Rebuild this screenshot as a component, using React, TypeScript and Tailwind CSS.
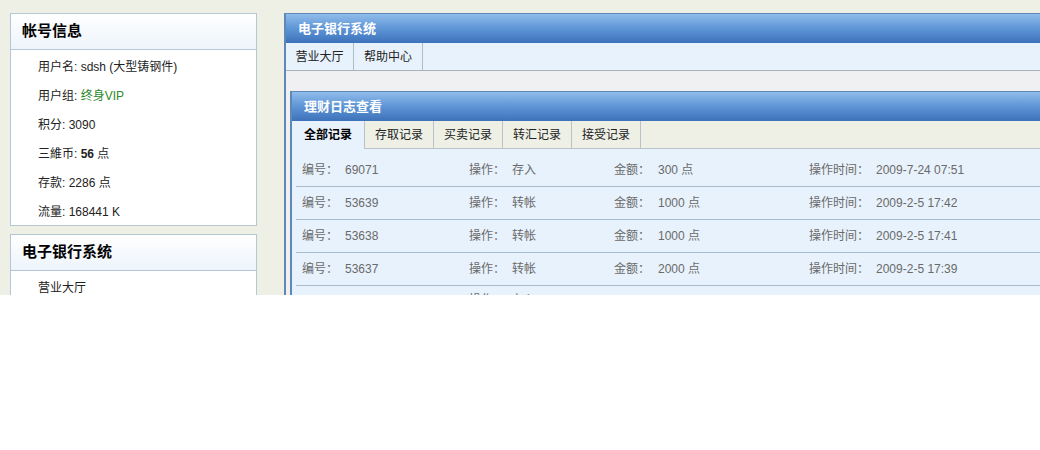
import React from 'react';

interface LogRow {
  id: string;
  op: string;
  amount: string;
  time: string;
}

const rows: LogRow[] = [
  { id: '69071', op: '存入', amount: '300 点', time: '2009-7-24 07:51' },
  { id: '53639', op: '转帐', amount: '1000 点', time: '2009-2-5 17:42' },
  { id: '53638', op: '转帐', amount: '1000 点', time: '2009-2-5 17:41' },
  { id: '53637', op: '转帐', amount: '2000 点', time: '2009-2-5 17:39' },
];

const font = { fontFamily: '"Liberation Sans", "Noto Sans CJK SC", sans-serif' };

function SideBox({ title, children, bodyClass = '' }: { title: string; children: React.ReactNode; bodyClass?: string }) {
  return (
    <div className="border border-[#b4c6d8] bg-white">
      <div className="h-[36px] border-b border-[#b4c6d8] bg-gradient-to-b from-white to-[#edf4fb] pl-[11px] flex items-center text-[15px] font-bold text-black">
        {title}
      </div>
      <div className={`pt-[3px] pl-[27px] text-[12px] text-[#222] ${bodyClass}`}>{children}</div>
    </div>
  );
}

function Item({ children }: { children: React.ReactNode }) {
  return <div className="h-[29px] leading-[29px] whitespace-nowrap">{children}</div>;
}

export default function App() {
  const subTabs = ['存取记录', '买卖记录', '转汇记录', '接受记录'];

  return (
    <div className="w-[1040px] h-[450px] bg-white overflow-hidden" style={font}>
      <div className="h-[295px] overflow-hidden bg-[#eef0e6] flex pt-[13px]">
        {/* left column */}
        <div className="ml-[10px] w-[247px] shrink-0 flex flex-col gap-[8px]">
          <SideBox title="帐号信息" bodyClass="h-[175px] overflow-hidden">
            <Item>用户名: sdsh (大型铸钢件)</Item>
            <Item>
              用户组: <span className="text-[#2c8a2c]">终身VIP</span>
            </Item>
            <Item>积分: 3090</Item>
            <Item>
              三維币: <b>56</b> 点
            </Item>
            <Item>存款: 2286 点</Item>
            <Item>流量: 168441 K</Item>
          </SideBox>
          <SideBox title="电子银行系统">
            <Item>营业大厅</Item>
            <Item>帮助中心</Item>
          </SideBox>
        </div>

        {/* main panel */}
        <div className="ml-[27px] w-[800px] shrink-0 border-t border-l-2 border-[#5f88b4] bg-[#f0f0f2]">
          <div className="h-[29px] bg-gradient-to-b from-[#90bcea] via-[#5e95d6] to-[#3d72ba] pl-[12px] flex items-center text-[13px] font-bold text-white">
            电子银行系统
          </div>
          <div className="h-[28px] flex bg-[#e8f2fc] border-b border-[#a8b4c0] text-[12px] text-[#222]">
            <div className="w-[68px] border-r border-[#b0bcc8] flex items-center justify-center">营业大厅</div>
            <div className="w-[69px] border-r border-[#b0bcc8] flex items-center justify-center">帮助中心</div>
          </div>

          <div className="pt-[20px] pl-[4px]">
            <div className="border-t border-l-2 border-[#5f88b4] bg-[#e8f2fc]">
              <div className="h-[29px] bg-gradient-to-b from-[#90bcea] via-[#5e95d6] to-[#3d72ba] pl-[12px] flex items-center text-[13px] font-bold text-white">
                理财日志查看
              </div>
              <div className="h-[28px] flex bg-[#eef0e6] text-[12px] text-[#222]">
                <div className="w-[73px] border-r border-[#b8c2c8] bg-[#e8f2fc] flex items-center justify-center font-bold text-black">
                  全部记录
                </div>
                {subTabs.map((t) => (
                  <div
                    key={t}
                    className="w-[69px] border-r border-b border-[#b8c2c8] flex items-center justify-center"
                  >
                    {t}
                  </div>
                ))}
                <div className="flex-1 border-b border-[#b8c2c8]" />
              </div>

              <div className="pt-[5px] px-[4px] text-[12px] text-[#6a6a6a]">
                {rows.map((r) => (
                  <div key={r.id} className="h-[33px] border-b border-[#a9bccd] flex items-center pl-[6px]">
                    <div className="w-[167px] whitespace-nowrap">
                      编号：<span className="ml-[7px]">{r.id}</span>
                    </div>
                    <div className="w-[145px] whitespace-nowrap">
                      操作：<span className="ml-[7px]">{r.op}</span>
                    </div>
                    <div className="w-[195px] whitespace-nowrap">
                      金额：<span className="ml-[8px]">{r.amount}</span>
                    </div>
                    <div className="whitespace-nowrap">
                      操作时间：<span className="ml-[7px]">{r.time}</span>
                    </div>
                  </div>
                ))}
                <div className="h-[33px] flex items-start pt-[5px] pl-[173px]">
                  <div className="whitespace-nowrap">
                    操作：<span className="ml-[7px]">存入</span>
                  </div>
                </div>
              </div>
            </div>
          </div>
        </div>
      </div>
    </div>
  );
}
